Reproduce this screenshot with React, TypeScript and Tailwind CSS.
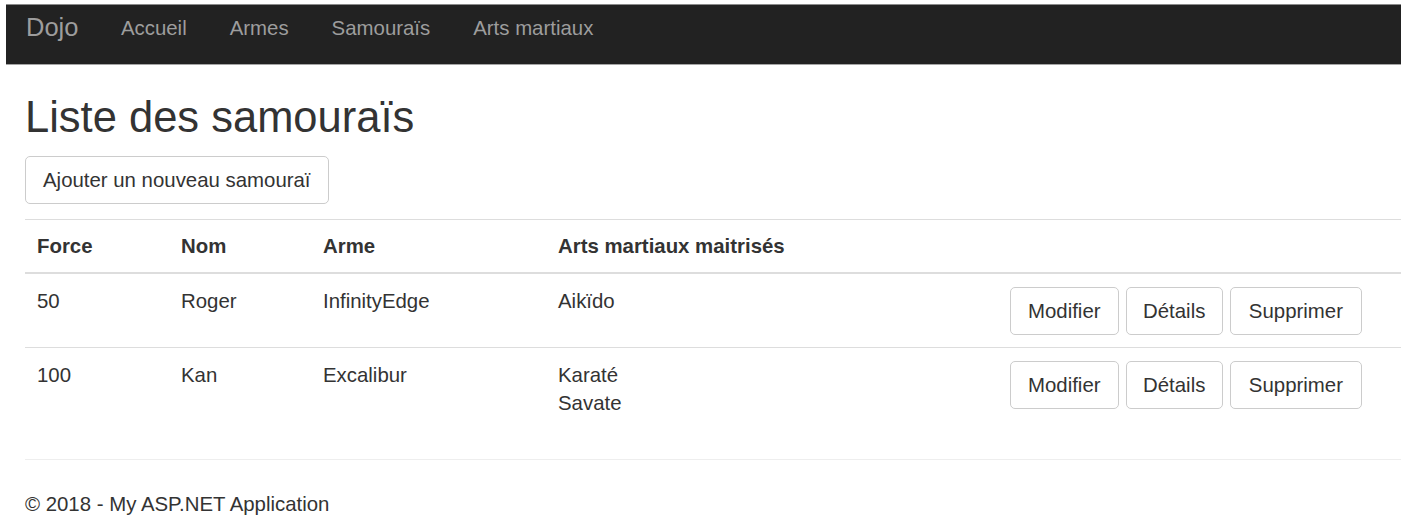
import React from "react";

type Samourai = {
  force: number;
  nom: string;
  arme: string;
  arts: string[];
};

const samourais: Samourai[] = [
  { force: 50, nom: "Roger", arme: "InfinityEdge", arts: ["Aikïdo"] },
  { force: 100, nom: "Kan", arme: "Excalibur", arts: ["Karaté", "Savate"] },
];

const navLinks = ["Accueil", "Armes", "Samouraïs", "Arts martiaux"];

const cols = "grid grid-cols-[144px_142px_235px_452px_1fr]";

const Btn = ({ children, className = "" }: { children: React.ReactNode; className?: string }) => (
  <button
    className={`border border-[#ccc] bg-white rounded-[5px] py-[9px] leading-[28px] text-[20.4px] text-[#333] ${className}`}
  >
    {children}
  </button>
);

export default function App() {
  return (
    <div
      className="h-[525px] overflow-hidden bg-white text-[#333] pt-[4px] pl-[6px] pr-[7px]"
      style={{ fontFamily: '"Liberation Sans", Arial, sans-serif' }}
    >
      <nav className="h-[61px] bg-[#222] border-t border-t-[#8a8a8a] border-b border-b-[#a5a5a5] flex items-start pl-[20px]">
        <a className="pt-[8px] pr-[21px] text-[25.5px] leading-[28px] text-[#9d9d9d]">Dojo</a>
        {navLinks.map((link) => (
          <a key={link} className="pt-[9px] px-[21.5px] text-[20.4px] leading-[28px] text-[#9d9d9d]">
            {link}
          </a>
        ))}
      </nav>

      <main className="pl-[19px]">
        <h1 className="mt-[29px] mb-[15px] text-[43.5px] leading-[47px] font-normal">Liste des samouraïs</h1>
        <Btn className="px-[17px] mb-[15px]">Ajouter un nouveau samouraï</Btn>

        <div className="border-t border-[#ddd] text-[20.4px] leading-[28px]">
          <div className={`${cols} border-b-2 border-[#ddd] font-bold`}>
            <div className="px-[12px] py-[12px]">Force</div>
            <div className="px-[12px] py-[12px]">Nom</div>
            <div className="px-[12px] py-[12px]">Arme</div>
            <div className="px-[12px] py-[12px]">Arts martiaux maitrisés</div>
            <div className="px-[12px] py-[12px]"></div>
          </div>
          {samourais.map((s, index) => (
            <div
              key={s.nom}
              className={`${cols} ${index > 0 ? "border-t border-[#ddd]" : ""}`}
            >
              <div className="px-[12px] py-[12.5px]">{s.force}</div>
              <div className="px-[12px] py-[12.5px]">{s.nom}</div>
              <div className="px-[12px] py-[12.5px]">{s.arme}</div>
              <div className="px-[12px] py-[12.5px]">
                {s.arts.map((a) => (
                  <div key={a}>{a}</div>
                ))}
              </div>
              <div className="px-[12px] py-[12.5px] flex items-start gap-[7px]">
                <Btn className="px-[17px]">Modifier</Btn>
                <Btn className="px-[16.5px]">Détails</Btn>
                <Btn className="px-[18px]">Supprimer</Btn>
              </div>
            </div>
          ))}
        </div>

        <hr className="mt-[30px] border-0 border-t border-[#eee]" />
        <footer className="pt-[29.5px]">
          <p className="text-[20.4px] leading-[28px]">© 2018 - My ASP.NET Application</p>
        </footer>
      </main>
    </div>
  );
}
